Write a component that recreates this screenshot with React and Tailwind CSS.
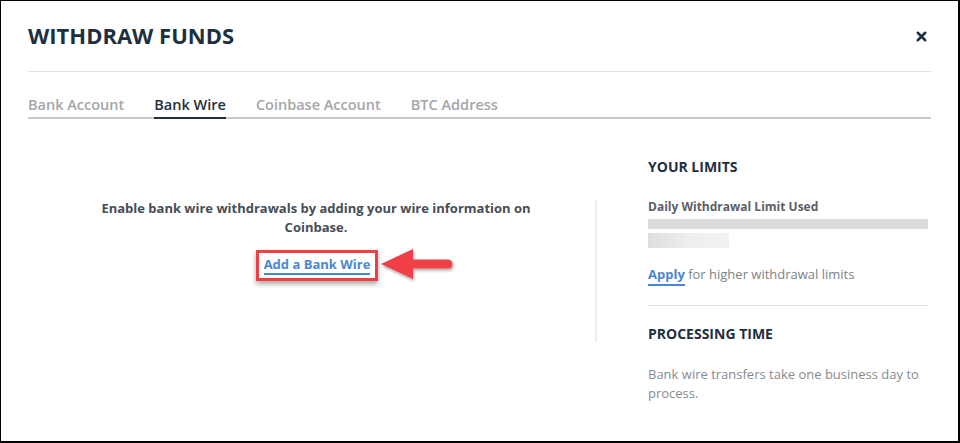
import { X } from "lucide-react";

const tabs = ["Bank Account", "Bank Wire", "Coinbase Account", "BTC Address"];

function Arrow() {
  // red annotation arrow pointing left at the link
  return (
    <svg width="80" height="42" viewBox="0 0 80 42" className="absolute left-[124px] top-[-3px]">
      <defs>
        <filter id="sh" x="-20%" y="-20%" width="140%" height="160%">
          <feDropShadow dx="1" dy="2" stdDeviation="1.5" floodColor="#000" floodOpacity="0.35" />
        </filter>
      </defs>
      <g filter="url(#sh)">
        <line x1="28" y1="17" x2="68" y2="17" stroke="#ef4146" strokeWidth="9" strokeLinecap="round" />
        <polygon points="1,17 33,2 33,32" fill="#ef4146" />
      </g>
    </svg>
  );
}

export default function App() {
  return (
    <div
      className="w-[960px] h-[443px] bg-white border-l border-t border-r-2 border-b-2 border-black overflow-hidden"
      style={{ fontFamily: '"Open Sans", sans-serif' }}
    >
      <div className="px-[27px]">
        {/* header */}
        <div className="flex items-center justify-between pt-[19px]">
          <h1 className="text-[22px] leading-[30px] font-bold text-[#1e2f3e]">WITHDRAW FUNDS</h1>
          <X size={15} strokeWidth={4} className="text-[#1e2f3e] mr-[2px] mt-[2px]" />
        </div>
        <div className="mt-[21px] h-px bg-[#e1e1e1]" />

        {/* tabs */}
        <div className="mt-[23px] flex gap-[30px] border-b-2 border-[#c9c9c9]">
          {tabs.map((t) => (
            <div
              key={t}
              className={`text-[14.5px] leading-[20px] font-semibold pb-[2px] -mb-[2px] border-b-2 ${
                t === "Bank Wire" ? "text-[#1e2f3e] border-[#1e2f3e]" : "text-[#a3a6aa] border-transparent"
              }`}
            >
              {t}
            </div>
          ))}
        </div>

        {/* content */}
        <div className="flex">
          <div className="w-[569px] pt-[80px]">
            <div className="h-[143px] border-r-2 border-[#efefef] pl-[9px] flex flex-col items-center">
              <p className="max-w-[440px] text-center text-[13px] leading-[19px] font-bold text-[#474d55]">
                Enable bank wire withdrawals by adding your wire information on Coinbase.
              </p>
              <div className="relative mt-[13px] ml-[2px]">
                <div className="border-[3px] border-[#ee3f44] px-[5px] pt-[2px] pb-[3px] shadow-[0_3px_5px_rgba(0,0,0,0.35)]">
                  <a className="block text-[13px] leading-[18px] font-bold text-[#4a87d3] border-b-2 border-[#4a87d3]">
                    Add a Bank Wire
                  </a>
                </div>
                <Arrow />
              </div>
            </div>
          </div>

          <div className="w-[331px] pl-[51px] pt-[38px]">
            <h2 className="text-[14px] leading-[20px] font-bold text-[#1e2f3e]">YOUR LIMITS</h2>
            <div className="mt-[22px] text-[12px] leading-[16px] font-bold text-[#5b6067]">
              Daily Withdrawal Limit Used
            </div>
            <div className="mt-[4px] h-[10px] bg-[#dcdcdc]" />
            <div className="mt-[4px] h-[15px] w-[81px] bg-gradient-to-r from-[#dedede] via-[#eeeeee] to-[#f2f2f2]" />
            <div className="mt-[16px] text-[13px] leading-[20px] text-[#7d8186]">
              <span className="font-bold text-[#4a87d3] border-b-2 border-[#4a87d3] pb-[1px]">Apply</span> for higher withdrawal limits
            </div>
            <div className="mt-[21px] h-px bg-[#e3e3e3]" />
            <h2 className="mt-[18px] text-[14px] leading-[20px] font-bold text-[#1e2f3e]">PROCESSING TIME</h2>
            <p className="mt-[21px] text-[13px] leading-[19px] text-[#878b90]">
              Bank wire transfers take one business day to process.
            </p>
          </div>
        </div>
      </div>
    </div>
  );
}
